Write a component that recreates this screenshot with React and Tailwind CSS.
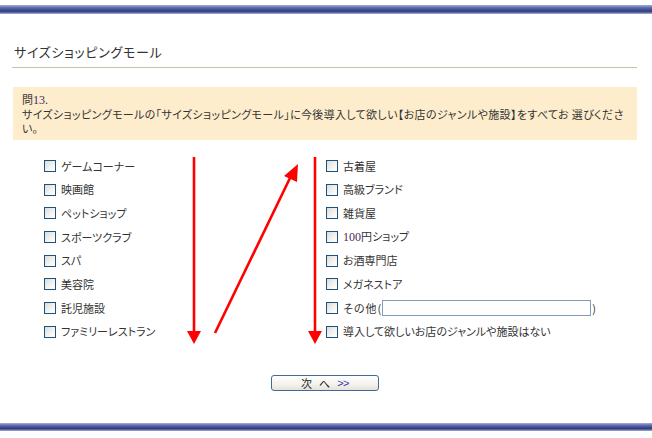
import React from 'react';

const jp = "font-['Noto_Sans_CJK_JP',sans-serif] [font-feature-settings:'palt']";

const leftItems = ['ゲームコーナー', '映画館', 'ペットショップ', 'スポーツクラブ', 'スパ', '美容院', '託児施設', 'ファミリーレストラン'];

const Box = () => (
  <span className="inline-block w-[12px] h-[12px] shrink-0 border border-[#1c5180] bg-[linear-gradient(135deg,#dcdcd7,#f4f4f1_60%,#ffffff)]" />
);

const Row = ({ children }) => (
  <div className="flex items-center h-[23.7px] gap-[5px]">
    <Box />
    <span className="whitespace-nowrap">{children}</span>
  </div>
);

const Bar = ({ className = '' }) => (
  <div className={`w-full bg-[linear-gradient(#a9b0d2,#6574b4_25%,#3d4a8c_55%,#34407e_70%,#6f7cb8_90%,#c3c8e0)] ${className}`} />
);

export default function App() {
  return (
    <div className={`relative w-[652px] h-[438px] bg-white overflow-hidden flex flex-col text-[#333] ${jp}`}>
      <Bar className="mt-[5px] h-[9px]" />

      {/* title */}
      <div className="mt-[30px] ml-[12px] w-[625px] border-b border-[#c4c4ae] pl-[2px] pb-[7px] text-[13px] leading-[16px] tracking-[0.7px]">
        サイズショッピングモール
      </div>

      {/* question */}
      <div className="mt-[19px] ml-[13px] w-[624px] h-[53px] bg-[#fdedcc] pl-[9px] pt-[5px] text-[11px] leading-[14px]">
        <div>
          問<span className="font-['Liberation_Serif',serif] text-[12px] text-[#4a2860]">13.</span>
        </div>
        <div className="whitespace-nowrap tracking-[0.35px]">
          サイズショッピングモールの「サイズショッピングモール」に今後導入して欲しい【お店のジャンルや施設】をすべてお 選びくださ
        </div>
        <div>い。</div>
      </div>

      {/* options */}
      <div className="mt-[14px] flex text-[11px]">
        <div className="ml-[44px] w-[282px] flex flex-col">
          {leftItems.map((t) => (
            <Row key={t}>{t}</Row>
          ))}
        </div>
        <div className="flex flex-col">
          <Row>古着屋</Row>
          <Row>高級ブランド</Row>
          <Row>雑貨屋</Row>
          <Row>
            <span className="font-['Liberation_Serif',serif] text-[12px] text-[#4a2860]">100</span>円ショップ
          </Row>
          <Row>お酒専門店</Row>
          <Row>メガネストア</Row>
          <div className="flex items-center h-[23.7px] gap-[5px]">
            <Box />
            <span className="whitespace-nowrap tracking-[1px]">その他(</span>
            <input
              type="text"
              className="ml-[-5px] w-[209px] h-[16px] border border-[#7f9db9] bg-white outline-none"
            />
            <span className="ml-[-4px]">)</span>
          </div>
          <Row>導入して欲しいお店のジャンルや施設はない</Row>
        </div>
      </div>

      {/* next button */}
      <button className="mt-[31px] ml-[271px] w-[108px] h-[16px] rounded-[3px] border border-[#3f6a9a] bg-[linear-gradient(#ffffff,#f3f2ec_60%,#e4e2d8)] text-[11px] leading-[14px] text-[#222] flex items-center justify-center gap-[7px]">
        <span>次</span>
        <span>へ</span>
        <span className="font-['Liberation_Sans',sans-serif] text-[#3b34a8] tracking-[-0.5px]">&gt;&gt;</span>
      </button>

      <Bar className="mt-[32px] h-[8px]" />

      {/* red annotation arrows */}
      <svg className="absolute top-0 left-0 pointer-events-none" width="652" height="438" viewBox="0 0 652 438">
        <g fill="#ff0000" stroke="#ff0000">
          <line x1="194" y1="157" x2="194" y2="332" strokeWidth="2.6" />
          <polygon points="187,331 201,331 194,344" stroke="none" />
          <line x1="215" y1="333" x2="290" y2="178" strokeWidth="2.6" />
          <polygon points="298,164 284,176 297,182" stroke="none" />
          <line x1="315" y1="157" x2="315" y2="332" strokeWidth="2.6" />
          <polygon points="308,331 322,331 315,344" stroke="none" />
        </g>
      </svg>
    </div>
  );
}
